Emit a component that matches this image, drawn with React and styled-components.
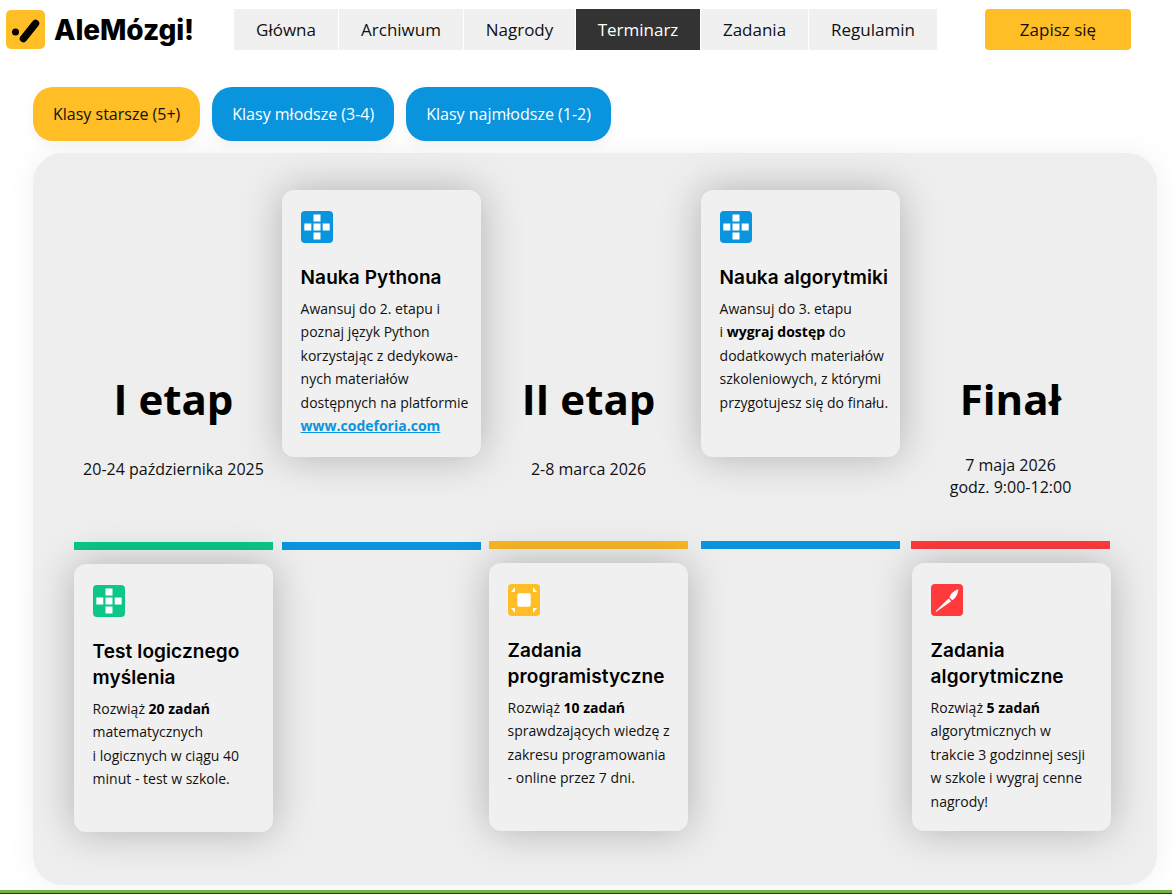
import React from 'react';
import styled, { createGlobalStyle } from 'styled-components';

const GlobalStyle = createGlobalStyle`
  html, body {
    margin: 0;
    padding: 0;
    background: #fff;
    font-family: 'Open Sans', 'Noto Sans', sans-serif;
    color: #000;
  }
`;

const Page = styled.div`
  width: 1172px;
  height: 894px;
  overflow: hidden;
`;

const Header = styled.header`
  display: flex;
  align-items: center;
  height: 41px;
  padding: 9px 0 0 6px;
`;

const Logo = styled.a`
  display: flex;
  align-items: center;
  gap: 9px;
  width: 228px;
  font-family: Inter, sans-serif;
  font-size: 28px;
  font-weight: 800;
  letter-spacing: -0.1px;
  color: #000;
`;

const Nav = styled.nav`
  display: flex;
  gap: 1px;
`;

const NavItem = styled.a`
  display: flex;
  align-items: center;
  justify-content: center;
  width: ${(p) => p.$width}px;
  height: 41px;
  font-size: 17px;
  background: ${(p) => (p.$active ? '#333333' : '#f0f0f0')};
  color: ${(p) => (p.$active ? '#fff' : '#111')};
`;

const SignUp = styled.a`
  display: flex;
  align-items: center;
  justify-content: center;
  width: 146px;
  height: 41px;
  margin-left: 48px;
  border-radius: 4px;
  font-size: 17px;
  background: #ffbe26;
  color: #111;
`;

const Tabs = styled.div`
  display: flex;
  gap: 12px;
  padding: 37px 0 0 33px;
`;

const Tab = styled.a`
  display: flex;
  align-items: center;
  height: 54px;
  padding: 0 20px;
  border-radius: 20px;
  font-size: 16px;
  background: ${(p) => (p.$active ? '#ffbe26' : '#0a94dd')};
  color: ${(p) => (p.$active ? '#111' : '#fff')};
  box-shadow: 0 4px 12px rgba(0, 0, 0, 0.05);
`;

const Panel = styled.section`
  display: flex;
  box-sizing: border-box;
  width: 1124px;
  height: 732px;
  margin: 12px 0 5px 33px;
  padding: 37px 0 0 41px;
  border-radius: 30px;
  background: #eeeeee;
  box-shadow: 0 0 30px rgba(0, 0, 0, 0.06);
`;

const Column = styled.div`
  display: flex;
  flex-direction: column;
  width: 199px;
  margin-left: ${(p) => p.$offset || 0}px;
`;

const Upper = styled.div`
  display: flex;
  flex-direction: column;
  align-items: center;
  height: ${(p) => p.$height}px;
`;

const StageTitle = styled.h2`
  margin: 176px 0 0;
  font-size: 42px;
  line-height: 66px;
  font-weight: 700;
  white-space: nowrap;
`;

const StageDate = styled.div`
  margin-top: ${(p) => p.$top}px;
  font-size: 16px;
  line-height: 22px;
  text-align: center;
  white-space: nowrap;
  color: #111;
`;

const Bar = styled.div`
  height: 8px;
  margin-bottom: 14px;
  background: ${(p) => p.$color};
`;

const Card = styled.article`
  box-sizing: border-box;
  flex: none;
  width: 199px;
  height: ${(p) => p.$height || 268}px;
  margin-left: ${(p) => p.$nudge || 0}px;
  padding: 21px 0 0 18.6px;
  border-radius: 12px;
  background: #f0f0f0;
  box-shadow: 0 0 40px rgba(0, 0, 0, 0.26);
`;

const IconBox = styled.svg`
  display: block;
  width: 32px;
  height: 32px;
`;

const CardTitle = styled.h3`
  margin: 22px 0 6px;
  font-family: Inter, sans-serif;
  font-size: 19px;
  line-height: 26px;
  font-weight: 600;
  letter-spacing: 0.1px;
  white-space: nowrap;
`;

const CardText = styled.p`
  margin: 0;
  font-size: 14px;
  line-height: 23.4px;
  white-space: nowrap;
  color: #111;

  b {
    font-weight: 700;
    color: #000;
  }
`;

const CardLink = styled.a`
  font-weight: 700;
  color: #0a94dd;
  text-decoration: underline;
`;

const Footer = styled.footer`
  height: 3px;
  background: #76b041;
  border-bottom: 1px solid #2f2a4a;
`;

const LogoIcon = () => (
  <svg width="39" height="39" viewBox="0 0 39 39">
    <rect width="39" height="39" rx="5" fill="#ffbe26" />
    <circle cx="9.5" cy="22" r="3.5" fill="#000" />
    <path d="M29.5 13.5 L17.5 28.5" stroke="#000" strokeWidth="7.5" strokeLinecap="round" />
  </svg>
);

const CrossIcon = ({ color }) => (
  <IconBox viewBox="0 0 32 32">
    <rect width="32" height="32" rx="4" fill={color} />
    <path
      d="M12.5 3.5h7v7h-7zM3.3 12.5h7v7h-7zM12.5 12.5h7v7h-7zM21.7 12.5h7v7h-7zM12.5 21.5h7v7h-7z"
      fill="#fff"
    />
  </IconBox>
);

const SquareIcon = ({ color }) => (
  <IconBox viewBox="0 0 32 32">
    <rect width="32" height="32" rx="4" fill={color} />
    <rect x="9.3" y="9.3" width="13.4" height="13.4" rx="2" fill="#fff" />
    <path d="M7 3v5H3zM25 3l4 5h-4zM3 24h4v5zM25 24h4l-4 5z" fill="#fff" />
  </IconBox>
);

const BrushIcon = ({ color }) => (
  <IconBox viewBox="0 0 32 32">
    <rect width="32" height="32" rx="4" fill={color} />
    <path
      d="M4.5 27.2 L17.6 14.6 L20.2 17.2 L5.4 27.8 Z M18.5 13.5 C19.5 9.5 23 6.8 27.4 5.3 C27 10 24.8 14 21.3 16.2 Z"
      fill="#fff"
    />
  </IconBox>
);

const navItems = [
  { label: 'Główna', width: 104 },
  { label: 'Archiwum', width: 124 },
  { label: 'Nagrody', width: 111 },
  { label: 'Terminarz', width: 124, active: true },
  { label: 'Zadania', width: 107 },
  { label: 'Regulamin', width: 128 },
];

const App = () => (
  <Page>
    <GlobalStyle />
    <Header>
      <Logo>
        <LogoIcon />
        AleMózgi!
      </Logo>
      <Nav>
        {navItems.map((item) => (
          <NavItem key={item.label} $width={item.width} $active={item.active}>
            {item.label}
          </NavItem>
        ))}
      </Nav>
      <SignUp>Zapisz się</SignUp>
    </Header>

    <Tabs>
      <Tab $active>Klasy starsze (5+)</Tab>
      <Tab>Klasy młodsze (3-4)</Tab>
      <Tab>Klasy najmłodsze (1-2)</Tab>
    </Tabs>

    <Panel>
      <Column>
        <Upper $height={352}>
          <StageTitle>I etap</StageTitle>
          <StageDate $top={26}>20-24 października 2025</StageDate>
        </Upper>
        <Bar $color="#0cc788" />
        <Card>
          <CrossIcon color="#0cc788" />
          <CardTitle>
            Test logicznego
            <br />
            myślenia
          </CardTitle>
          <CardText>
            Rozwiąż <b>20 zadań</b>
            <br />
            matematycznych
            <br />i logicznych w ciągu 40
            <br />
            minut - test w szkole.
          </CardText>
        </Card>
      </Column>

      <Column $offset={9}>
        <Upper $height={352}>
          <Card $height={267}>
            <CrossIcon color="#0a94dd" />
            <CardTitle>Nauka Pythona</CardTitle>
            <CardText>
              Awansuj do 2. etapu i
              <br />
              poznaj język Python
              <br />
              korzystając z dedykowa-
              <br />
              nych materiałów
              <br />
              dostępnych na platformie
              <br />
              <CardLink>www.codeforia.com</CardLink>
            </CardText>
          </Card>
        </Upper>
        <Bar $color="#0a94dd" />
      </Column>

      <Column $offset={8}>
        <Upper $height={351}>
          <StageTitle>II etap</StageTitle>
          <StageDate $top={26}>2-8 marca 2026</StageDate>
        </Upper>
        <Bar $color="#f8b824" />
        <Card>
          <SquareIcon color="#ffbe26" />
          <CardTitle>
            Zadania
            <br />
            programistyczne
          </CardTitle>
          <CardText>
            Rozwiąż <b>10 zadań</b>
            <br />
            sprawdzających wiedzę z
            <br />
            zakresu programowania
            <br />- online przez 7 dni.
          </CardText>
        </Card>
      </Column>

      <Column $offset={13}>
        <Upper $height={351}>
          <Card $height={267}>
            <CrossIcon color="#0a94dd" />
            <CardTitle>Nauka algorytmiki</CardTitle>
            <CardText>
              Awansuj do 3. etapu
              <br />i <b>wygraj dostęp</b> do
              <br />
              dodatkowych materiałów
              <br />
              szkoleniowych, z którymi
              <br />
              przygotujesz się do finału.
            </CardText>
          </Card>
        </Upper>
        <Bar $color="#0a94dd" />
      </Column>

      <Column $offset={11}>
        <Upper $height={351}>
          <StageTitle>Finał</StageTitle>
          <StageDate $top={22}>
            7 maja 2026
            <br />
            godz. 9:00-12:00
          </StageDate>
        </Upper>
        <Bar $color="#ff3a3d" />
        <Card $nudge={1}>
          <BrushIcon color="#ff3a3d" />
          <CardTitle>
            Zadania
            <br />
            algorytmiczne
          </CardTitle>
          <CardText>
            Rozwiąż <b>5 zadań</b>
            <br />
            algorytmicznych w
            <br />
            trakcie 3 godzinnej sesji
            <br />w szkole i wygraj cenne
            <br />
            nagrody!
          </CardText>
        </Card>
      </Column>
    </Panel>

    <Footer />
  </Page>
);

export default App;
